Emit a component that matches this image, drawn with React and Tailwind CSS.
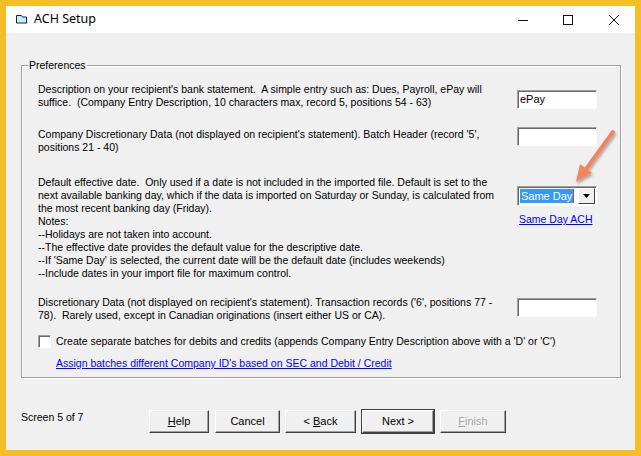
import React from 'react';

const font = { fontFamily: '"Liberation Sans", Arial, sans-serif' };

const sunken =
  'border border-t-[#a0a0a0] border-l-[#a0a0a0] border-r-white border-b-white shadow-[inset_1px_1px_0_#696969] bg-white';

const Field = ({ value }) => (
  <div className={`w-[80px] h-[19px] ${sunken} flex items-center pl-[2px] text-[11px] text-black`}>{value}</div>
);

const Btn = ({ children, w, ml, def, disabled }) => (
  <div
    className={`${w} ${ml} h-[23px] flex items-center justify-center text-[11px] bg-[#f0f0f0] border border-t-white border-l-white border-r-[#404040] border-b-[#404040] shadow-[inset_-1px_-1px_0_#a0a0a0] ${
      def ? 'outline outline-1 outline-[#404040]' : ''
    } ${disabled ? 'text-[#a0a0a0] [text-shadow:1px_1px_0_white]' : 'text-black'}`}
  >
    {children}
  </div>
);

const Row = ({ lines, children, mt }) => (
  <div className={`grid grid-cols-[479px_80px] items-start ${mt}`}>
    <div className="whitespace-pre leading-[13px] text-[10.5px] text-black">
      {lines.map((l, i) => (
        <div key={i}>{l}</div>
      ))}
    </div>
    <div>{children}</div>
  </div>
);

export default function App() {
  return (
    <div className="relative w-[641px] h-[456px] bg-[#f5be24] p-[6px] flex flex-col" style={font}>
      {/* title bar */}
      <div className="h-[27px] bg-white flex items-center shrink-0">
        <svg width="14" height="12" viewBox="0 0 14 12" className="ml-[9px]">
          <path d="M1.5 1.5h5l1 1.5h4v6h-10z" fill="#bfeefa" stroke="#222" strokeWidth="1" />
          <path d="M10.5 9.5l2 -1" stroke="#777" strokeWidth="1" />
        </svg>
        <span className="ml-[5px] text-[12.5px] text-black" style={{ fontFamily: '"Noto Sans", "Open Sans", sans-serif' }}>
          ACH Setup
        </span>
        <div className="ml-auto flex items-center">
          <svg width="12" height="12" className="mr-[33px]"><path d="M1 6.5h10" stroke="#111" strokeWidth="1" /></svg>
          <svg width="12" height="12" className="mr-[34px]"><rect x="1.5" y="1.5" width="9" height="9" fill="none" stroke="#111" strokeWidth="1" /></svg>
          <svg width="12" height="12" className="mr-[15px]"><path d="M1 1l10 10M11 1L1 11" stroke="#111" strokeWidth="1" /></svg>
        </div>
      </div>

      {/* body */}
      <div className="flex-1 bg-[#f0f0f0] flex flex-col">
        <div className="relative ml-[15px] mt-[32px] w-[600px] h-[313px] border border-[#a0a0a0] shadow-[1px_1px_0_white,inset_1px_1px_0_white] pl-[16px]">
          <div className="absolute left-[6px] top-[-7px] bg-[#f0f0f0] px-[1px] text-[10.5px] leading-[13px] text-black">Preferences</div>

          <Row
            mt="mt-[17px]"
            lines={[
              "Description on your recipient's bank statement.  A simple entry such as: Dues, Payroll, ePay will",
              'suffice.  (Company Entry Description, 10 characters max, record 5, positions 54 - 63)',
            ]}
          >
            <div className="mt-[7px]">
              <Field value="ePay" />
            </div>
          </Row>

          <Row
            mt="mt-[19px]"
            lines={[
              "Company Discretionary Data (not displayed on recipient's statement). Batch Header (record '5',",
              'positions 21 - 40)',
            ]}
          >
            <div className="mt-[-1px]">
              <Field value="" />
            </div>
          </Row>

          <Row
            mt="mt-[22px]"
            lines={[
              'Default effective date.  Only used if a date is not included in the imported file. Default is set to the',
              'next available banking day, which if the data is imported on Saturday or Sunday, is calculated from',
              'the most recent banking day (Friday).',
              'Notes:',
              '--Holidays are not taken into account.',
              '--The effective date provides the default value for the descriptive date.',
              "--If 'Same Day' is selected, the current date will be the default date (includes weekends)",
              '--Include dates in your import file for maximum control.',
            ]}
          >
            <div className="mt-[10px] w-[80px] h-[20px] border border-t-[#a0a0a0] border-l-[#a0a0a0] border-r-white border-b-white shadow-[inset_1px_1px_0_#696969] bg-white flex items-center pl-[2px] pr-[1px]">
              <span className="bg-[#3399ff] text-white text-[11px] leading-[14px] pl-[1px] pr-[1px] whitespace-nowrap border-r border-[#c05020]">Same Day</span>
              <div className="ml-auto w-[17px] h-[16px] bg-[#f0f0f0] border border-t-white border-l-white border-r-[#404040] border-b-[#404040] flex items-center justify-center">
                <svg width="7" height="4"><path d="M0 0h7L3.5 4z" fill="#000" /></svg>
              </div>
            </div>
            <div className="mt-[7px] ml-[2px] text-[10.5px] leading-[13px] text-[#0000ff] underline whitespace-nowrap">Same Day ACH</div>
          </Row>

          <Row
            mt="mt-[16px]"
            lines={[
              "Discretionary Data (not displayed on recipient's statement). Transaction records ('6', positions 77 -",
              '78).  Rarely used, except in Canadian originations (insert either US or CA).',
            ]}
          >
            <div className="mt-[2px]">
              <Field value="" />
            </div>
          </Row>

          <div className="mt-[13px] flex items-center">
            <div className={`w-[13px] h-[13px] ${sunken}`} />
            <span className="ml-[5px] text-[10.5px] leading-[13px] text-black whitespace-pre">
              Create separate batches for debits and credits (appends Company Entry Description above with a 'D' or 'C')
            </span>
          </div>
          <div className="mt-[9px] ml-[18px] text-[10.5px] leading-[13px] text-[#0000ff] underline">
            Assign batches different Company ID's based on SEC and Debit / Credit
          </div>
        </div>

        {/* footer */}
        <div className="mt-[32px] flex items-start">
          <div className="w-[143px] pl-[15px] mt-[1px] text-[10.5px] leading-[13px] text-black">Screen 5 of 7</div>
          <Btn w="w-[60px]">
            <span><span className="underline">H</span>elp</span>
          </Btn>
          <Btn w="w-[65px]" ml="ml-[6px]">Cancel</Btn>
          <Btn w="w-[71px]" ml="ml-[5px]">
            <span>&lt; <span className="underline">B</span>ack</span>
          </Btn>
          <Btn w="w-[72px]" ml="ml-[6px]" def>
            Next &gt;
          </Btn>
          <Btn w="w-[66px]" ml="ml-[6px]" disabled>
            <span><span className="underline">F</span>inish</span>
          </Btn>
        </div>
      </div>

      {/* annotation arrow */}
      <svg className="absolute left-[560px] top-[120px]" width="70" height="75" viewBox="0 0 70 75">
        <defs>
          <filter id="sh" x="-30%" y="-30%" width="160%" height="160%">
            <feDropShadow dx="1" dy="2" stdDeviation="1.5" floodColor="#000" floodOpacity="0.35" />
          </filter>
        </defs>
        <g filter="url(#sh)">
          <path d="M53 12L24 52" stroke="#f4845f" strokeWidth="4" strokeLinecap="round" />
          <path d="M16 62L20 44L32 53z" fill="#f4845f" />
        </g>
      </svg>
    </div>
  );
}
